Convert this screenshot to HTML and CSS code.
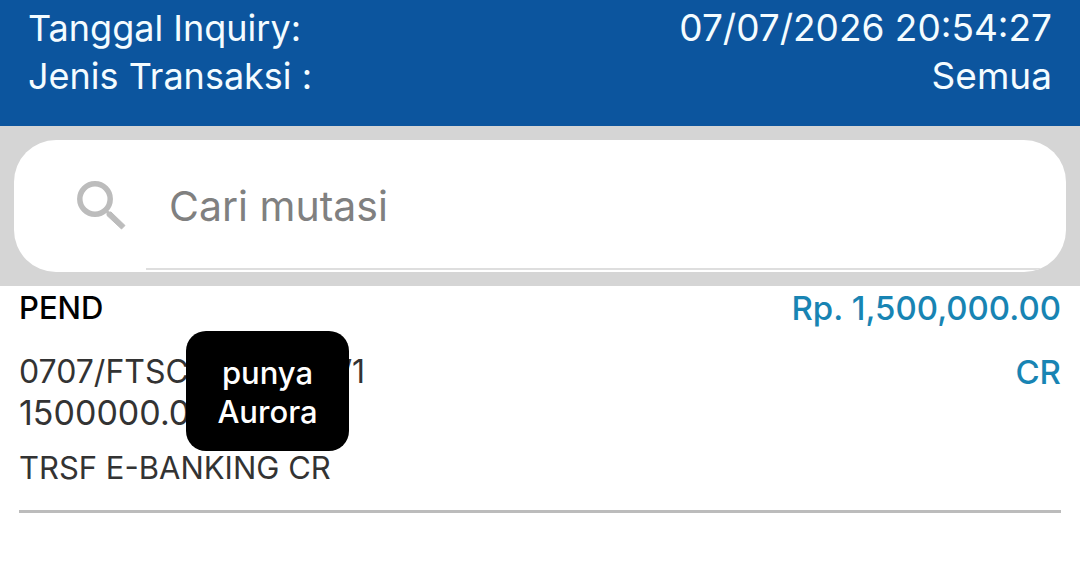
FILE: index.html
```html
<!DOCTYPE html>
<html lang="id">
<head>
<meta charset="utf-8">
<meta name="viewport" content="width=device-width, initial-scale=1">
<title>Mutasi</title>
<link rel="stylesheet" href="styles.css">
</head>
<body>
<header class="inquiry">
  <dl class="inquiry-list">
    <div class="inquiry-row"><dt>Tanggal Inquiry:</dt><dd>07/07/2026 20:54:27</dd></div>
    <div class="inquiry-row"><dt>Jenis Transaksi :</dt><dd>Semua</dd></div>
  </dl>
</header>
<form class="search">
  <label class="search-box">
    <svg class="search-icon" viewBox="0 0 50 50" aria-hidden="true">
      <circle cx="19" cy="18" r="15.200" fill="none" stroke="currentColor" stroke-width="5.500"/>
      <path d="M29 28L33 31L35 31L49 44.500L45.500 48L31 34.500V32Z" fill="currentColor" stroke="currentColor" stroke-width="1"/>
    </svg>
    <input class="search-input" type="text" aria-label="Cari mutasi" placeholder="Cari mutasi">
  </label>
</form>
<main class="mutations">
  <article class="mutation">
    <div class="row strong"><span class="status">PEND</span><span class="credit">Rp. 1,500,000.00</span></div>
    <div class="row details">
      <div class="reference">
        <p class="reference-line"><span>0707/FTSC</span><span>/1</span></p>
        <p class="reference-amount">1500000.0</p>
        <div class="note">punya<br>Aurora</div>
      </div>
      <span class="credit strong">CR</span>
    </div>
    <p class="description">TRSF E-BANKING CR</p>
  </article>
</main>
</body>
</html>
```
FILE: styles.css
```css
* {
  box-sizing: border-box;
}

body {
  margin: 0;
  background: #fff;
  color: #333;
  font-family: Inter, "Liberation Sans", sans-serif;
  font-size: 32px;
  line-height: 40px;
}

p, dl, dd {
  margin: 0;
}

.inquiry {
  padding: 4px 28px 26px;
  background: #0c559e;
  color: #f4fcff;
  font-size: 36px;
  line-height: 48px;
}

.inquiry dd {
  font-size: 37px;
}

.inquiry-row,
.row {
  display: flex;
  justify-content: space-between;
}

.search {
  padding: 14px;
  background: #d5d5d5;
}

.search-box {
  display: flex;
  align-items: center;
  height: 132px;
  padding-left: 62px;
  overflow: hidden;
  border-radius: 42px;
  background: #fff;
}

.search-icon {
  flex: none;
  width: 50px;
  height: 50px;
  color: #bcbcbc;
}

.search-input {
  flex: 1;
  min-width: 0;
  height: 128px;
  margin-left: 20px;
  padding: 2px 23px 0;
  border: 0;
  border-bottom: 2px solid #dedede;
  outline: 0;
  background: none;
  color: #333;
  font: inherit;
  font-size: 41px;
}

.search-input::placeholder {
  color: #808080;
  opacity: 1;
}

.mutations {
  padding: 0 19px;
}

.mutation {
  padding: 2px 0 22px;
  border-bottom: 3px solid #bcbcbc;
}

.strong {
  font-weight: 500;
}

.status {
  color: #000;
  font-size: 31px;
}

.credit {
  color: #1884b3;
  font-size: 33px;
}

.details {
  margin-top: 24px;
}

.reference {
  position: relative;
}

.reference-line {
  display: flex;
  justify-content: space-between;
  width: 346px;
}

.reference-amount {
  font-size: 34px;
  line-height: 42px;
}

.note {
  position: absolute;
  top: -21px;
  left: 167px;
  width: 163px;
  padding: 22px 0 20px;
  border-radius: 20px;
  background: #000;
  color: #fff;
  font-size: 31px;
  font-weight: 500;
  line-height: 39px;
  text-align: center;
}

.description {
  margin-top: 14px;
  font-size: 31px;
}
```
